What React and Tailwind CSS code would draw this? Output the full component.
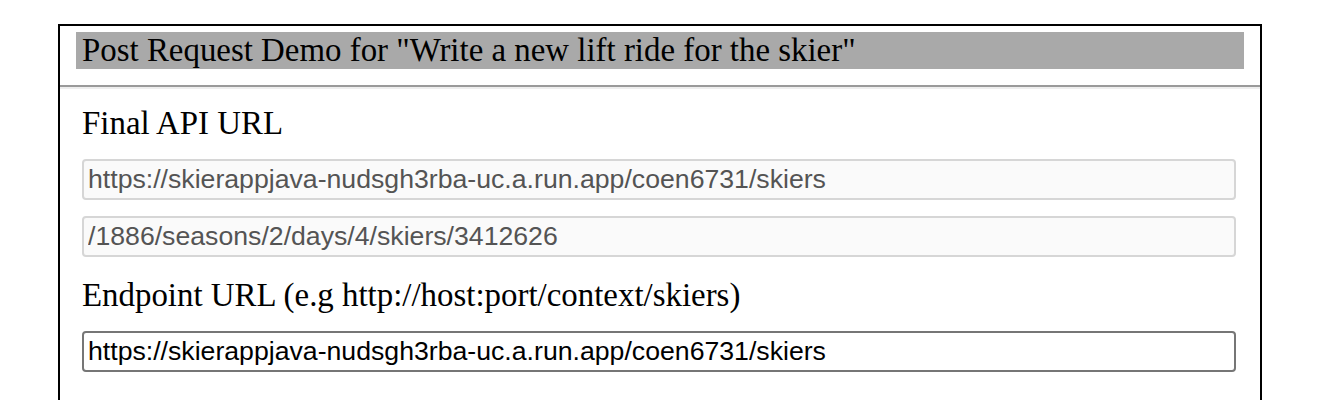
import React from "react";

function Label({ children, className = "" }) {
    return (
        <div
            className={`text-[32.9px] leading-[37px] text-black font-['Liberation_Serif',serif] whitespace-nowrap ${className}`}
        >
            {children}
        </div>
    );
}

function UrlInput({ value, disabled, className = "" }) {
    const look = disabled
        ? "bg-[#fafafa] border-[#d6d6d6] text-[#545454]"
        : "bg-white border-[#767676] text-black";
    return (
        <input
            type="text"
            readOnly
            value={value}
            className={`block w-full h-[41px] px-[4px] border-2 rounded-[4px] outline-none text-[26.67px] font-['Liberation_Sans',Arial,sans-serif] ${look} ${className}`}
        />
    );
}

export default function App() {
    return (
        <div className="bg-white min-h-[400px] pl-[58px] pt-[24px]">
            <div className="w-[1204px] min-h-[420px] border-2 border-black">
                {/* title bar */}
                <div className="mx-[16px] mt-[6px] h-[37px] bg-[#a9a9a9] pl-[6px] text-[32.9px] leading-[37px] text-black font-['Liberation_Serif',serif] whitespace-nowrap">
                    Post Request Demo for "Write a new lift ride for the skier"
                </div>

                <div className="mt-[16px] h-[4px] border-t-2 border-b-2 border-t-[#9a9a9a] border-b-[#eeeeee]" />

                <div className="pl-[22px] pr-[24px]">
                    <Label className="mt-[16px]">Final API URL</Label>
                    <UrlInput
                        disabled
                        className="mt-[17px]"
                        value="https://skierappjava-nudsgh3rba-uc.a.run.app/coen6731/skiers"
                    />
                    <UrlInput
                        disabled
                        className="mt-[16px]"
                        value="/1886/seasons/2/days/4/skiers/3412626"
                    />

                    <Label className="mt-[20px]">Endpoint URL (e.g http://host:port/context/skiers)</Label>
                    <UrlInput
                        className="mt-[17px]"
                        value="https://skierappjava-nudsgh3rba-uc.a.run.app/coen6731/skiers"
                    />
                </div>
            </div>
        </div>
    );
}
